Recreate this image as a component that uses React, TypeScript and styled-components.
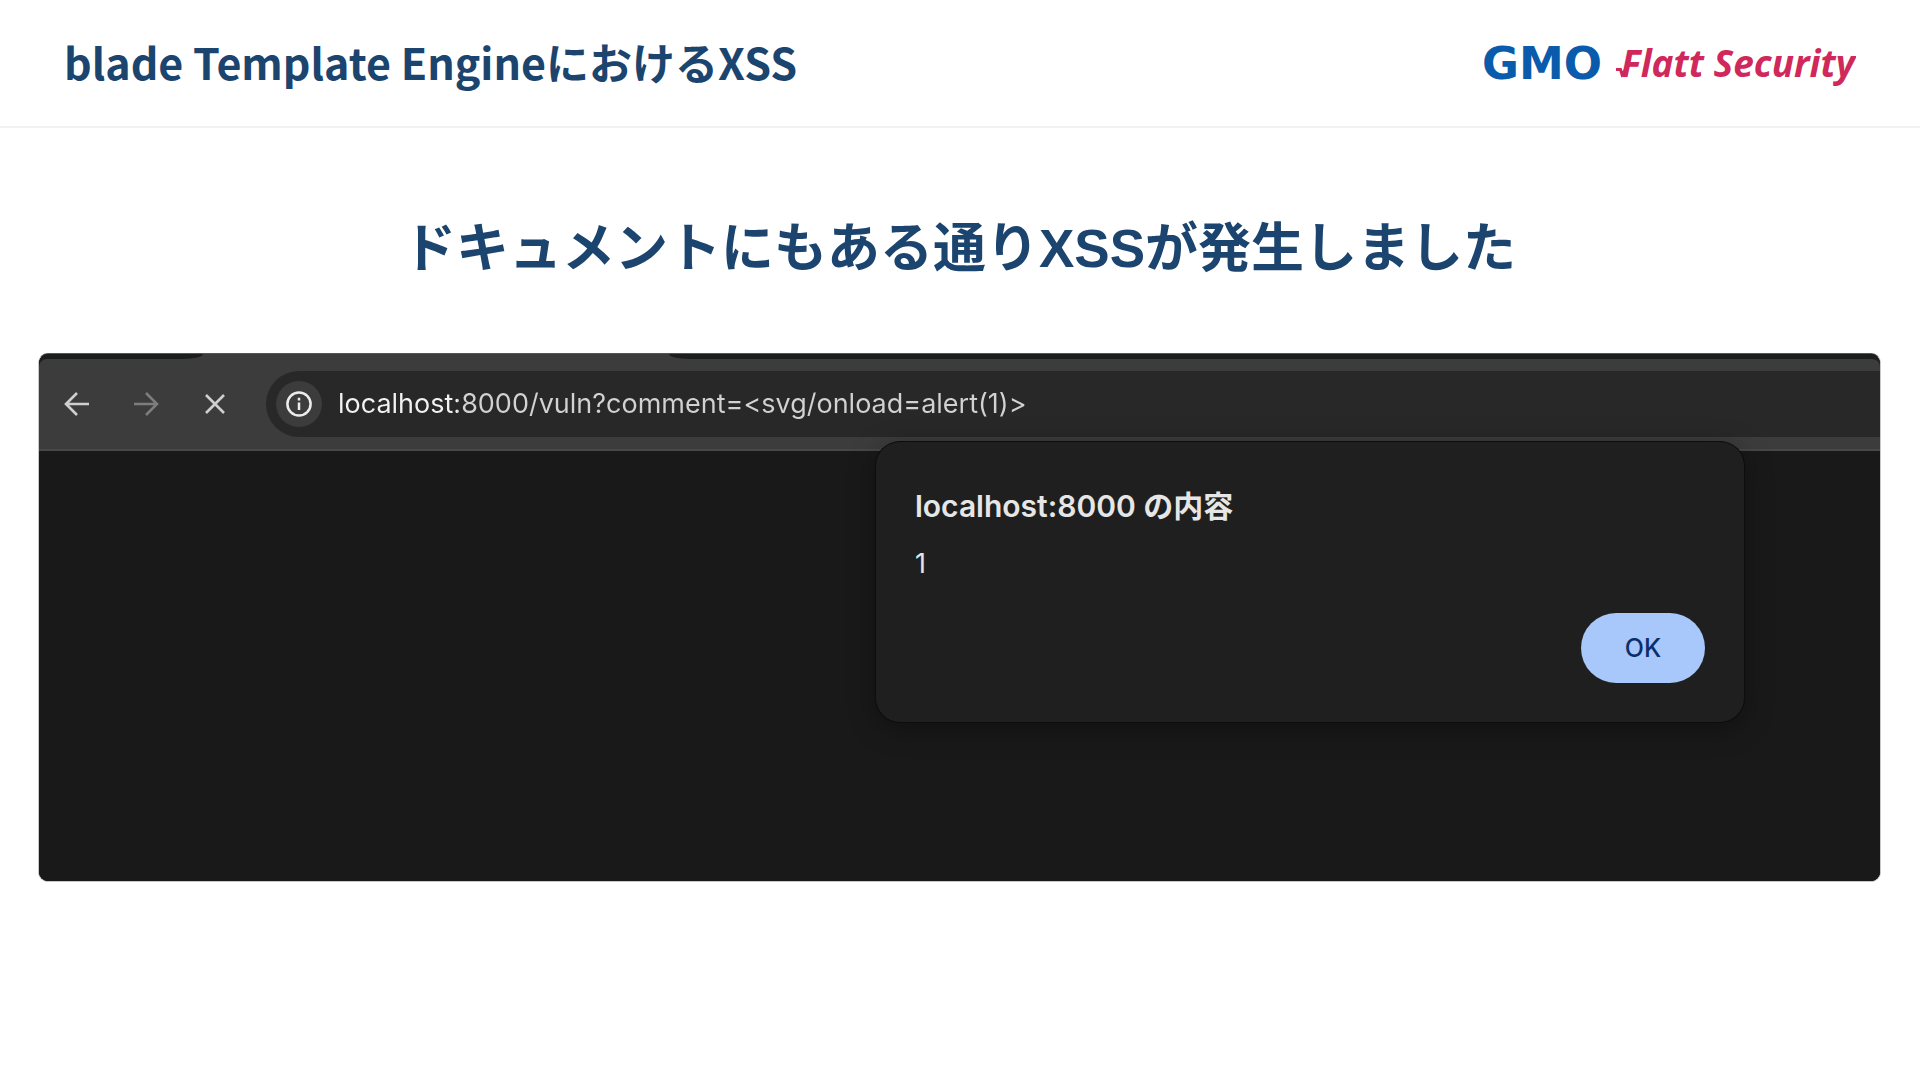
import React from 'react';
import styled, { createGlobalStyle } from 'styled-components';

const navy = '#1b446e';
const jpStack = '"Noto Sans CJK JP", "Liberation Sans", sans-serif';
const leadStack = '"Liberation Sans", "Noto Sans CJK JP", sans-serif';
const uiStack = 'Inter, "Noto Sans CJK JP", sans-serif';

const GlobalStyle = createGlobalStyle`
  *, *::before, *::after { box-sizing: border-box; }
  body { margin: 0; background: #fff; }
  h1, h2, p { margin: 0; }
`;

const Slide = styled.div`
  min-height: 100vh;
  display: flex;
  flex-direction: column;
  background: #fff;
`;

const Header = styled.header`
  height: 128px;
  padding: 0 64px 4px;
  display: flex;
  align-items: center;
  justify-content: space-between;
  border-bottom: 2px solid #f1f1f1;
`;

const Title = styled.h1`
  font: 700 43px/64px ${jpStack};
  color: ${navy};
  white-space: nowrap;
`;

const Logo = styled.svg`
  width: 376px;
  height: 56px;
  flex: none;
`;

const Main = styled.main`
  padding: 81px 39px 0 38px;
`;

const Lead = styled.h2`
  font: 700 53px/80px ${leadStack};
  color: ${navy};
  text-align: center;
`;

const Browser = styled.section`
  position: relative;
  margin-top: 64px;
  border: 1px solid #c9c9c9;
  border-top-color: #555;
  border-radius: 10px;
  background: #191919;
`;

const Frame = styled.div`
  border-radius: 9px;
  overflow: hidden;
  background: #1f1f1f;
`;

const TabStrip = styled.div`
  display: flex;
  height: 5px;
  background: #3c3c3c;
`;

const StripStart = styled.div`
  width: 164px;
  background: #1c1d1d;
  border-radius: 0 0 20px 0 / 0 0 5px 0;
`;

const ActiveTab = styled.div`
  width: 466px;
`;

const StripEnd = styled.div`
  flex: 1;
  background: #1c1d1d;
  border-radius: 0 0 0 20px / 0 0 0 5px;
`;

const Toolbar = styled.div`
  display: flex;
  align-items: center;
  height: 92px;
  padding-left: 3px;
  background: #3c3c3c;
  border-bottom: 2px solid #474747;
  border-radius: 8px 8px 0 0;
`;

const NavButton = styled.button<{ $dim?: boolean }>`
  width: 69px;
  height: 56px;
  padding: 0;
  border: 0;
  background: none;
  color: ${(p) => (p.$dim ? '#7d7d7d' : '#cfcfcf')};
  display: flex;
  align-items: center;
  justify-content: center;
`;

const AddressBar = styled.div`
  flex: 1;
  height: 66px;
  margin-left: 17px;
  padding-left: 10px;
  display: flex;
  align-items: center;
  gap: 16px;
  background: #282828;
  border-radius: 33px 0 0 33px;
`;

const SiteInfo = styled.button`
  width: 46px;
  height: 46px;
  padding: 0;
  border: 0;
  border-radius: 50%;
  background: #3c3c3c;
  color: #ececec;
  display: flex;
  align-items: center;
  justify-content: center;
`;

const Address = styled.input`
  flex: 1;
  min-width: 0;
  height: 40px;
  padding: 0;
  border: 0;
  outline: 0;
  font: 400 27px/40px ${uiStack};
  color: #d2d2d2;
  background: linear-gradient(to right, #f2f2f2 119px, #d2d2d2 119px);
  background-clip: text;
  -webkit-text-fill-color: transparent;
`;

const Viewport = styled.div`
  height: 430px;
  background: #191919;
`;

const Dialog = styled.div`
  position: absolute;
  top: 88px;
  right: 136px;
  width: 868px;
  max-width: 80%;
  padding: 40px 39px 39px;
  display: flex;
  flex-direction: column;
  color: #e6e6e6;
  background: #1f1f1f;
  border-radius: 24px;
  box-shadow: 0 0 0 1px #0d0d0d, 0 6px 28px rgba(0, 0, 0, 0.35);
`;

const DialogTitle = styled.h2`
  font: 600 30px/48px ${uiStack};
`;

const DialogText = styled.p`
  margin-top: 14px;
  font: 400 27px/40px ${uiStack};
`;

const OkButton = styled.button`
  align-self: flex-end;
  width: 124px;
  height: 70px;
  margin-top: 29px;
  padding: 0;
  border: 0;
  border-radius: 35px;
  font: 500 25px/40px ${uiStack};
  color: #0b2f6d;
  background: #a8c7fa;
`;

const ArrowIcon = ({ flip }: { flip?: boolean }) => (
  <svg width="26" height="26" viewBox="0 0 26 26" fill="none" stroke="currentColor" strokeWidth="2.6" aria-hidden="true">
    <path d={flip ? 'M1 13H23M13 2L24 13L13 24' : 'M25 13H3M13 2L2 13L13 24'} />
  </svg>
);

const CloseIcon = () => (
  <svg width="22" height="22" viewBox="0 0 22 22" fill="none" stroke="currentColor" strokeWidth="2.6" aria-hidden="true">
    <path d="M2 2L20 20M20 2L2 20" />
  </svg>
);

const InfoIcon = () => (
  <svg width="26" height="26" viewBox="0 0 26 26" fill="none" stroke="currentColor" strokeWidth="2.5" aria-hidden="true">
    <circle cx="13" cy="13" r="11.6" />
    <path d="M13 11.5V19M13 6.8V9.4" />
  </svg>
);

const BrandLogo = () => (
  <Logo viewBox="0 0 376 56" role="img" aria-label="GMO Flatt Security">
    <text x="2" y="46" fontFamily="DejaVu Sans" fontWeight="700" fontSize="45" fill="#0a5bab">GMO</text>
    <path d="M136 36.5H140.5L142 41.5L147 35" fill="none" stroke="#d0285a" strokeWidth="3" />
    <text x="141" y="44" fontFamily="Open Sans" fontWeight="700" fontStyle="italic" fontSize="37" fill="#d0285a">Flatt Security</text>
  </Logo>
);

export default function App() {
  return (
    <Slide>
      <GlobalStyle />
      <Header>
        <Title>blade Template EngineにおけるXSS</Title>
        <BrandLogo />
      </Header>
      <Main>
        <Lead>ドキュメントにもある通りXSSが発生しました</Lead>
        <Browser>
          <Frame>
            <TabStrip>
              <StripStart />
              <ActiveTab />
              <StripEnd />
            </TabStrip>
            <Toolbar>
              <NavButton type="button" aria-label="戻る"><ArrowIcon /></NavButton>
              <NavButton type="button" aria-label="進む" $dim><ArrowIcon flip /></NavButton>
              <NavButton type="button" aria-label="中止"><CloseIcon /></NavButton>
              <AddressBar>
                <SiteInfo type="button" aria-label="サイト情報"><InfoIcon /></SiteInfo>
                <Address
                  type="text"
                  aria-label="アドレス"
                  defaultValue="localhost:8000/vuln?comment=<svg/onload=alert(1)>"
                />
              </AddressBar>
            </Toolbar>
            <Viewport />
          </Frame>
          <Dialog role="alertdialog" aria-labelledby="alert-title" aria-describedby="alert-text">
            <DialogTitle id="alert-title">localhost:8000 の内容</DialogTitle>
            <DialogText id="alert-text">1</DialogText>
            <OkButton type="button">OK</OkButton>
          </Dialog>
        </Browser>
      </Main>
    </Slide>
  );
}
